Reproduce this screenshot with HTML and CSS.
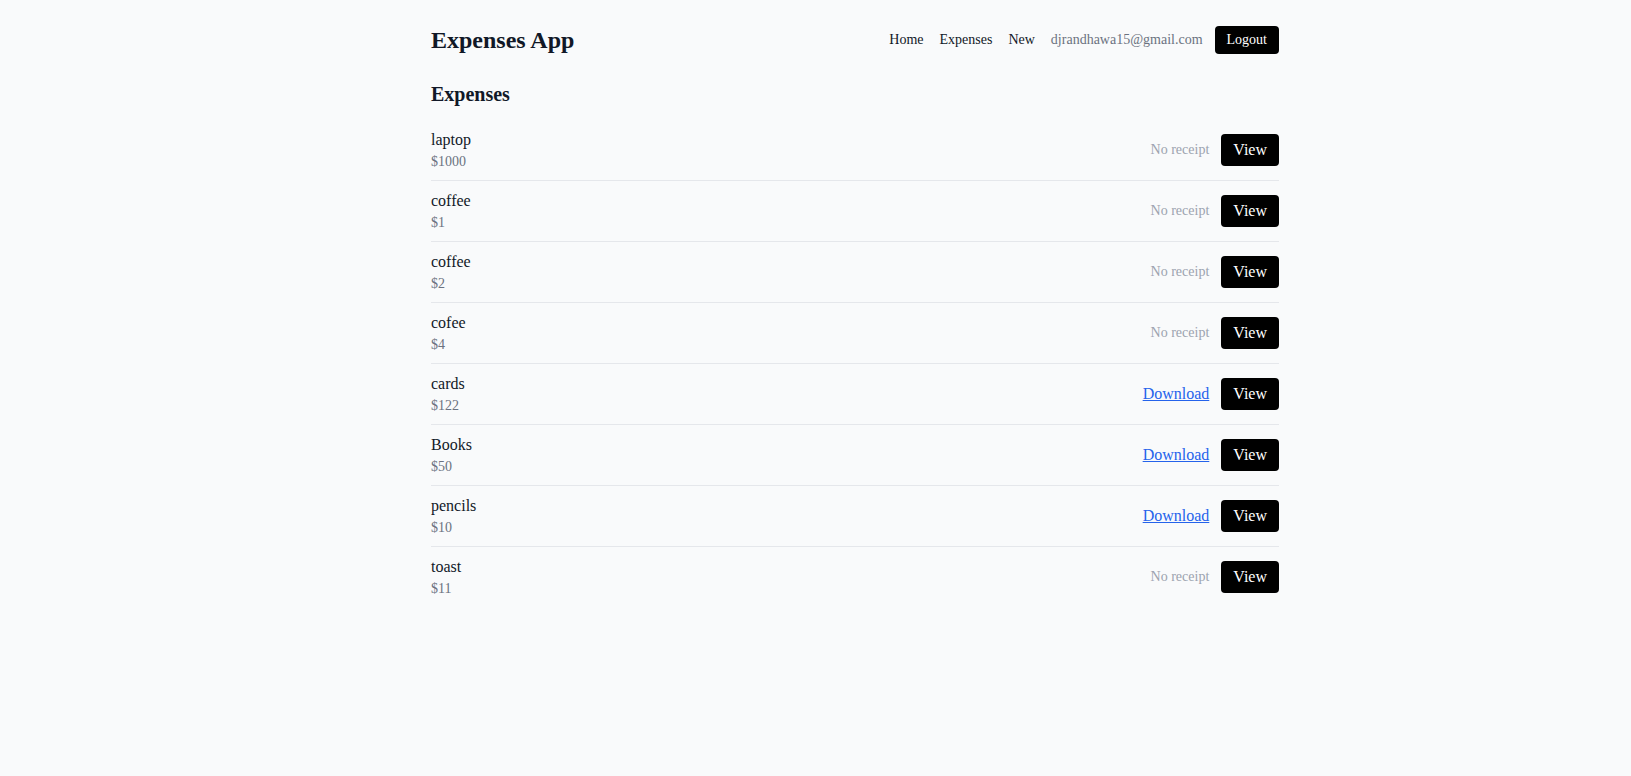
FILE: index.html
```html
<!DOCTYPE html>
<html>
<head>
<meta charset="utf-8">
<title>Expenses App</title>
<link rel="stylesheet" href="styles.css">
</head>
<body>
<div class="container">
  <header class="header">
    <h1 class="brand">Expenses App</h1>
    <nav class="nav">
      <a class="nav-link" href="#">Home</a>
      <a class="nav-link" href="#">Expenses</a>
      <a class="nav-link" href="#">New</a>
      <span class="user">djrandhawa15@gmail.com</span>
      <button class="btn btn-sm">Logout</button>
    </nav>
  </header>
  <main>
    <h2 class="title">Expenses</h2>
    <ul class="list">
      <li class="row"><div><div class="name">laptop</div><div class="amount">$1000</div></div><div class="actions"><span class="muted">No receipt</span><button class="btn">View</button></div></li>
      <li class="row"><div><div class="name">coffee</div><div class="amount">$1</div></div><div class="actions"><span class="muted">No receipt</span><button class="btn">View</button></div></li>
      <li class="row"><div><div class="name">coffee</div><div class="amount">$2</div></div><div class="actions"><span class="muted">No receipt</span><button class="btn">View</button></div></li>
      <li class="row"><div><div class="name">cofee</div><div class="amount">$4</div></div><div class="actions"><span class="muted">No receipt</span><button class="btn">View</button></div></li>
      <li class="row"><div><div class="name">cards</div><div class="amount">$122</div></div><div class="actions"><a class="link" href="#">Download</a><button class="btn">View</button></div></li>
      <li class="row"><div><div class="name">Books</div><div class="amount">$50</div></div><div class="actions"><a class="link" href="#">Download</a><button class="btn">View</button></div></li>
      <li class="row"><div><div class="name">pencils</div><div class="amount">$10</div></div><div class="actions"><a class="link" href="#">Download</a><button class="btn">View</button></div></li>
      <li class="row"><div><div class="name">toast</div><div class="amount">$11</div></div><div class="actions"><span class="muted">No receipt</span><button class="btn">View</button></div></li>
    </ul>
  </main>
</div>
</body>
</html>
```
FILE: styles.css
```css
* { box-sizing: border-box; }
html, body { margin: 0; padding: 0; }
body {
  background: #f9fafb;
  color: #111827;
  font-family: "Liberation Serif", "Times New Roman", serif;
  font-size: 16px;
  line-height: 24px;
}
.container {
  width: 848px;
  margin-left: 431px;
}
.header {
  display: flex;
  align-items: center;
  justify-content: space-between;
  padding: 24px 0;
}
.brand {
  margin: 0;
  font-size: 24px;
  line-height: 32px;
  font-weight: bold;
}
.nav {
  display: flex;
  align-items: center;
  gap: 16px;
  font-size: 14px;
  line-height: 20px;
}
.nav-link { color: #111827; text-decoration: none; }
.user { color: #6b7280; margin-right: -4px; }
.btn {
  background: #000;
  color: #fff;
  border: 0;
  border-radius: 4px;
  font-family: inherit;
  font-size: 16px;
  line-height: 24px;
  padding: 4px 12px;
  cursor: pointer;
}
.btn-sm {
  font-size: 14px;
  line-height: 20px;
  padding: 4px 12px;
}
.title {
  margin: 0 0 12px;
  padding-top: 1px;
  font-size: 20px;
  line-height: 27px;
  font-weight: bold;
}
.list { list-style: none; margin: 0; padding: 0; }
.row {
  display: flex;
  align-items: center;
  justify-content: space-between;
  padding: 8px 0;
}
.row + .row { border-top: 1px solid #e5e7eb; }
.name { font-size: 16px; line-height: 24px; }
.amount { font-size: 14px; line-height: 20px; color: #6b7280; }
.actions { display: flex; align-items: center; gap: 12px; }
.muted { font-size: 14px; color: #9ca3af; }
.link { color: #2563eb; text-decoration: underline; }
```
